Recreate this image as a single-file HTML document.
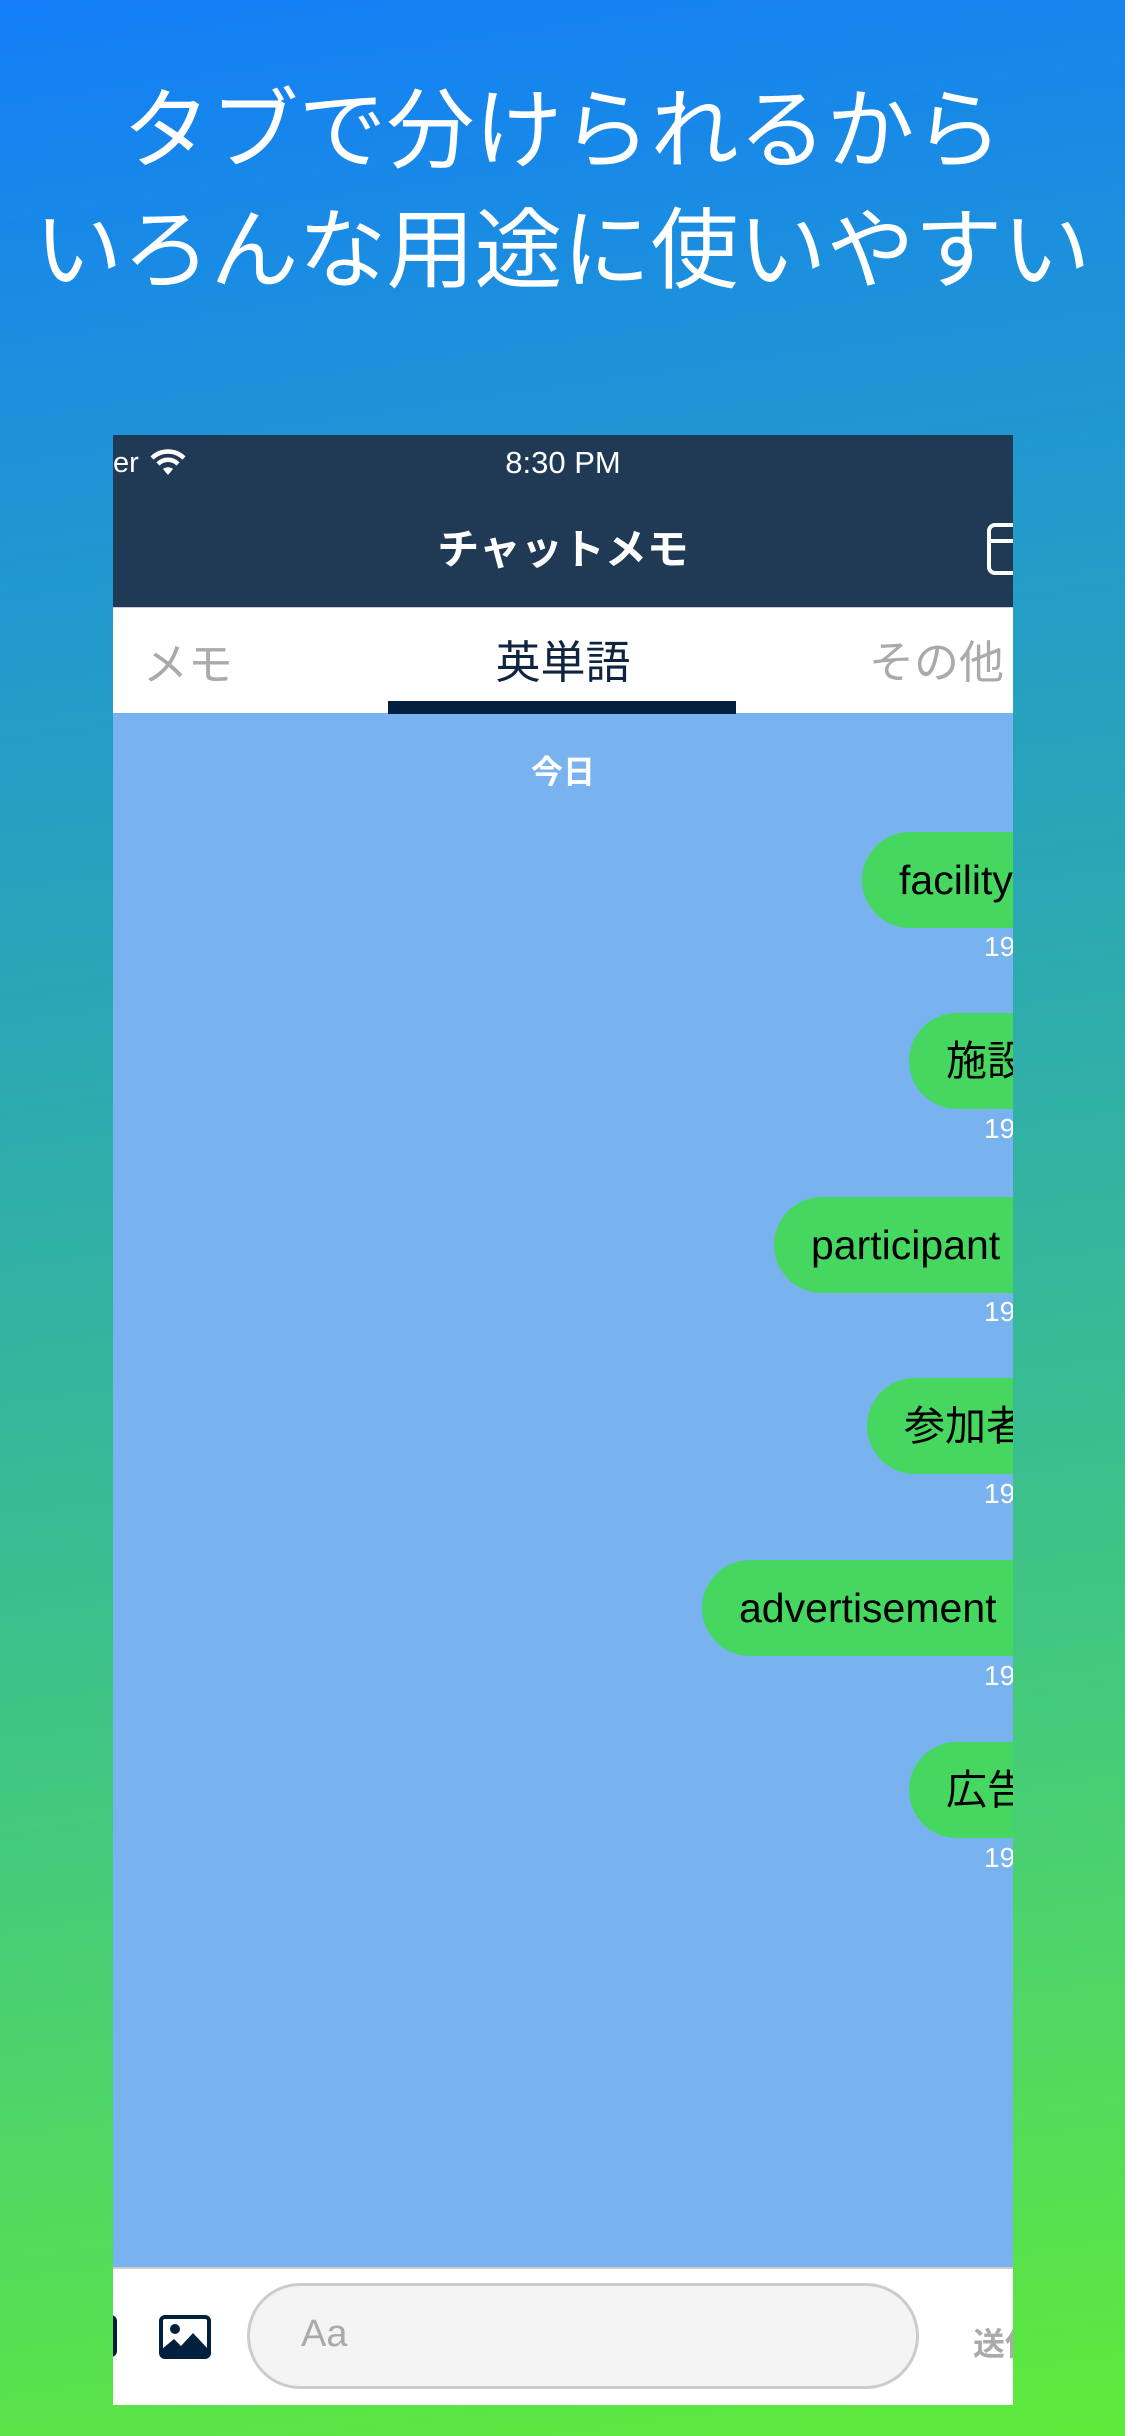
<!DOCTYPE html>
<html><head><meta charset="utf-8">
<style>
*{margin:0;padding:0;box-sizing:border-box}
body{width:1125px;height:2436px;overflow:hidden;position:relative;
background:linear-gradient(172deg,#137ef8 0%,#1f95d4 20%,#2aa8b4 40%,#3bbf8e 62%,#4fd666 82%,#5fea3a 100%);
font-family:"Liberation Sans","Noto Sans CJK JP",sans-serif}
.h{position:absolute;left:0;width:1125px;text-align:center;color:#fff;font-size:88px;line-height:100px;font-family:"Noto Sans CJK JP",sans-serif;font-weight:400}
.f{position:absolute;left:113px;top:435px;width:900px;height:1970px;overflow:hidden;background:#78b3f0}
.nav{position:absolute;left:0;top:0;width:900px;height:172px;background:#203a55;color:#fff}
.tabs{position:absolute;left:0;top:172px;width:900px;height:106px;background:#fff;border-top:1px solid #ccd}
.ab{position:absolute;white-space:nowrap}
.b{position:absolute;height:96px;border-radius:48px;background:#45d760;color:#000;font-size:41px;line-height:96px;padding-left:37px;width:600px;font-family:"Liberation Sans","Noto Sans CJK JP",sans-serif}
.t{position:absolute;color:#fff;font-size:28px;left:871px}
.bar{position:absolute;left:0;top:1832px;width:900px;height:138px;background:#fff;border-top:2px solid #ccc}
</style></head><body>
<div class="h" style="top:74px">タブで分けられるから</div>
<div class="h" style="top:194px">いろんな用途に使いやすい</div>
<div class="f">
 <div class="nav">
  <div class="ab" style="left:0;top:12px;font-size:29px">er</div>
  <svg class="ab" style="left:36px;top:14px" width="38" height="28" viewBox="0 0 38 28"><path d="M19 26 L14 20 A8 8 0 0 1 24 20 Z" fill="#fff"/><path d="M9 15 A14 14 0 0 1 29 15" stroke="#fff" stroke-width="4.5" fill="none"/><path d="M3 9 A23 23 0 0 1 35 9" stroke="#fff" stroke-width="4.5" fill="none"/></svg>
  <div class="ab" style="left:0;width:900px;text-align:center;top:10px;font-size:31px">8:30 PM</div>
  <div class="ab" style="left:0;width:900px;text-align:center;top:84px;font-size:42px;font-weight:bold;font-family:'Noto Sans CJK JP',sans-serif;line-height:56px">チャットメモ</div>
  <div class="ab" style="left:874px;top:88px;width:40px;height:52px;border:4px solid #fff;border-radius:8px"></div>
  <div class="ab" style="left:874px;top:104px;width:40px;height:4px;background:#fff"></div>
 </div>
 <div class="tabs">
  <div class="ab" style="left:30px;top:20px;font-size:45px;color:#aaa;font-family:'Noto Sans CJK JP',sans-serif">メモ</div>
  <div class="ab" style="left:0;width:900px;text-align:center;top:18px;font-size:45px;color:#0f2440;font-family:'Noto Sans CJK JP',sans-serif">英単語</div>
  <div class="ab" style="left:756px;top:18px;font-size:45px;color:#aaa;font-family:'Noto Sans CJK JP',sans-serif">その他</div>
  <div class="ab" style="left:275px;top:93px;width:348px;height:13px;background:#011f3f"></div>
 </div>
 <div class="ab" style="left:0;width:900px;text-align:center;top:312px;font-size:32px;color:#fff;font-weight:bold;font-family:'Noto Sans CJK JP',sans-serif">今日</div>
 <div class="b" style="left:749px;top:397px">facility</div><div class="t" style="top:496px">19:30</div>
 <div class="b" style="left:796px;top:578px">施設</div><div class="t" style="top:678px">19:30</div>
 <div class="b" style="left:661px;top:762px">participant</div><div class="t" style="top:861px">19:30</div>
 <div class="b" style="left:754px;top:943px">参加者</div><div class="t" style="top:1043px">19:30</div>
 <div class="b" style="left:589px;top:1125px">advertisement</div><div class="t" style="top:1225px">19:30</div>
 <div class="b" style="left:796px;top:1307px">広告</div><div class="t" style="top:1407px">19:30</div>
 <div class="bar">
  <div class="ab" style="left:-12px;top:46px;width:16px;height:42px;border:4px solid #011f3f;border-radius:6px"></div>
  <svg class="ab" style="left:46px;top:46px" width="52" height="44" viewBox="0 0 52 44"><rect x="2" y="2" width="48" height="40" rx="4" fill="none" stroke="#011f3f" stroke-width="4"/><circle cx="16" cy="14" r="5" fill="#011f3f"/><path d="M3 41 L3 34 L15 24 L22 31 L34 18 L49 34 L49 41 Z" fill="#011f3f"/></svg>
  <div class="ab" style="left:134px;top:14px;width:672px;height:106px;border:3px solid #ccc;border-radius:53px;background:#f4f4f4"></div>
  <div class="ab" style="left:188px;top:44px;font-size:38px;color:#aaa">Aa</div>
  <div class="ab" style="left:860px;top:50px;font-size:32px;color:#aaa;font-weight:bold;font-family:'Noto Sans CJK JP',sans-serif">送信</div>
 </div>
</div>
</body></html>
